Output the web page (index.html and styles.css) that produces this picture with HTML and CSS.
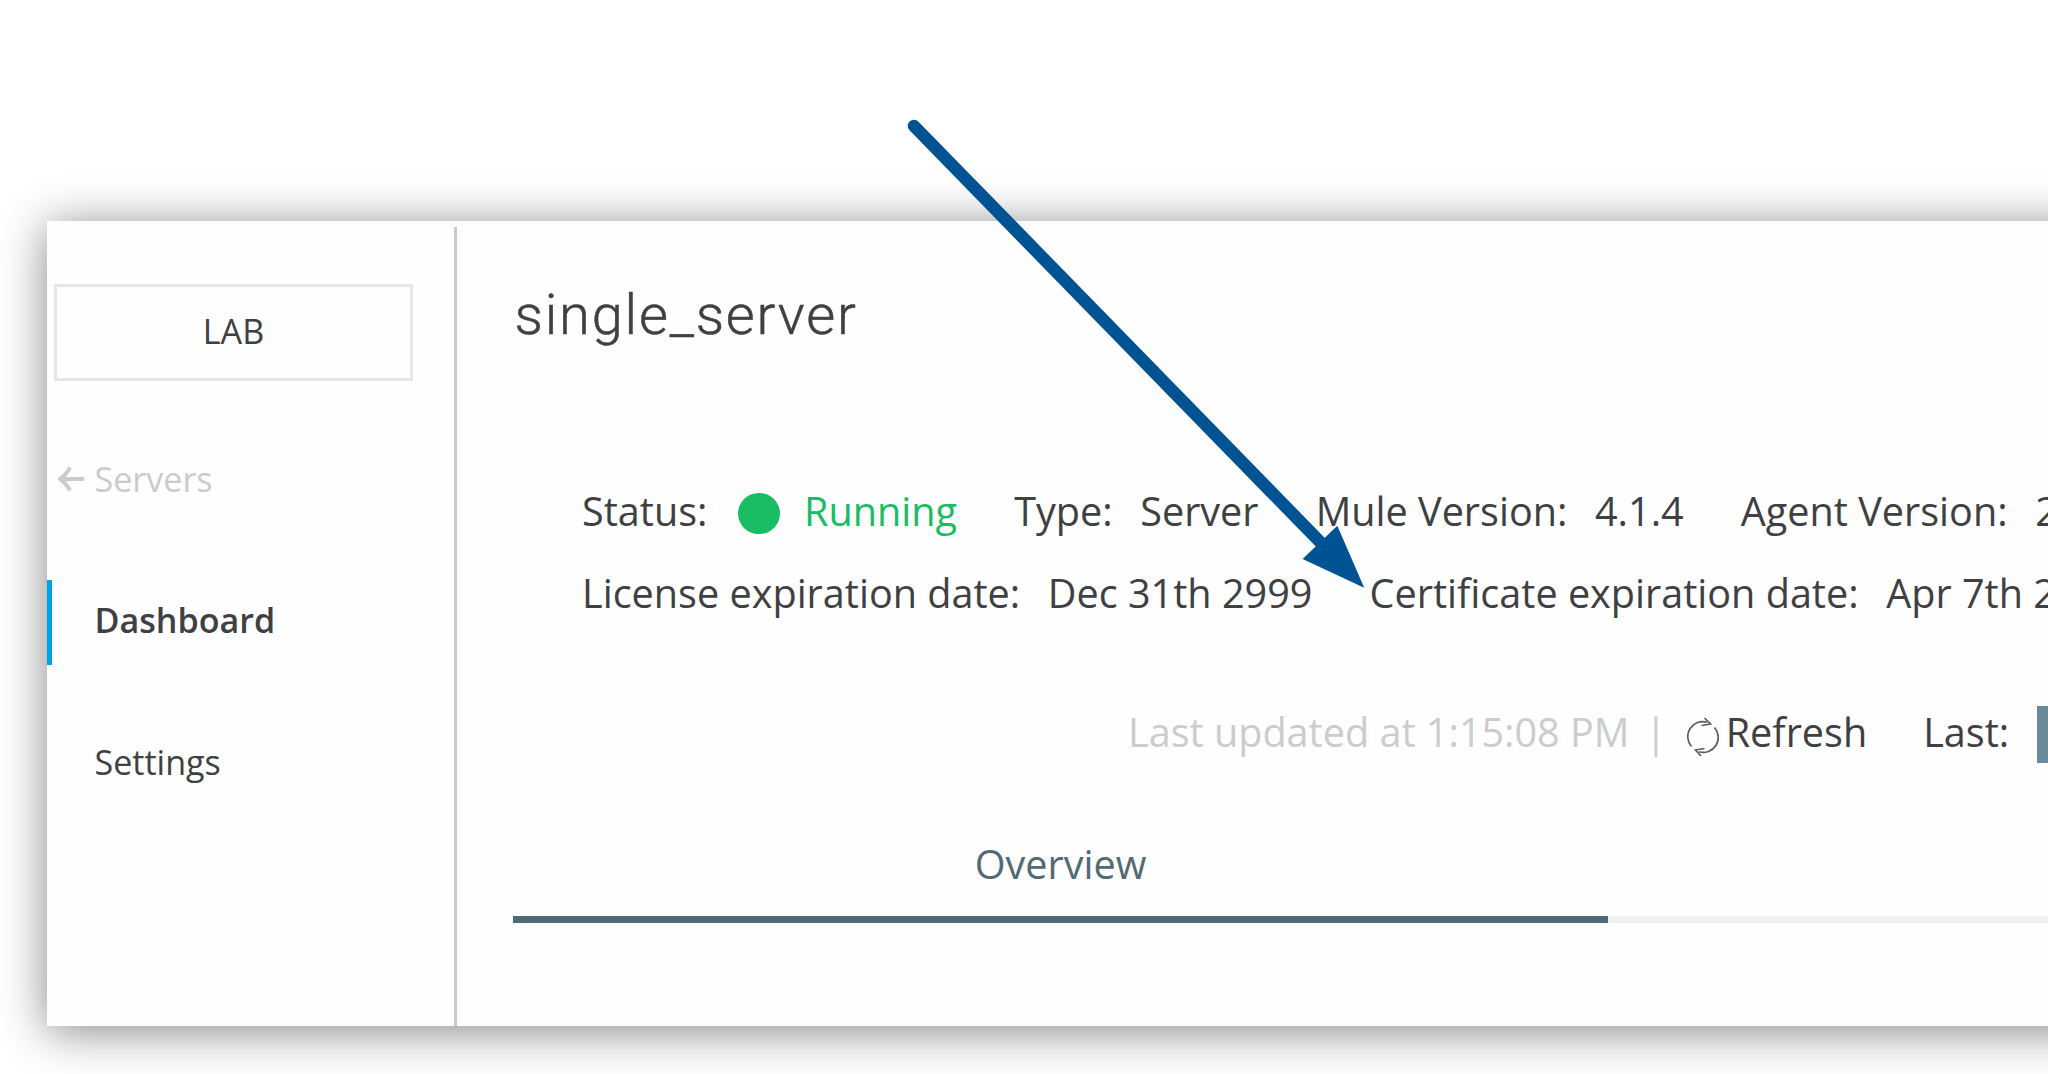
FILE: index.html
```
<!DOCTYPE html>
<html lang="en">
<head>
<meta charset="utf-8">
<title>single_server</title>
<link rel="stylesheet" href="styles.css">
</head>
<body>
<div class="page">
<div class="panel">
  <nav class="sidebar">
    <div class="env">LAB</div>
    <a class="back">
      <svg class="back-icon" viewBox="0 0 26 26"><path d="M26 13H3M12 1.5Q8 9 2 13Q8 17 12 24.500" fill="none" stroke="currentColor" stroke-width="4"/></svg>
      <span>Servers</span>
    </a>
    <a class="nav-item active">Dashboard</a>
    <a class="nav-item">Settings</a>
  </nav>
  <main class="content">
    <h1 class="title">single_server</h1>
    <section class="details">
      <div class="row">
        <div class="pair status"><span>Status:</span><span class="dot"></span><span class="running">Running</span></div>
        <div class="pair"><span>Type:</span><span>Server</span></div>
        <div class="pair"><span>Mule Version:</span><span>4.1.4</span></div>
        <div class="pair"><span>Agent Version:</span><span>2</span></div>
      </div>
      <div class="row">
        <div class="pair"><span>License expiration date:</span><span>Dec 31th 2999</span></div>
        <div class="pair"><span>Certificate expiration date:</span><span>Apr 7th 2</span></div>
      </div>
    </section>
    <div class="toolbar">
      <span class="muted">Last updated at 1:15:08 PM</span>
      <span class="muted separator">|</span>
      <span class="refresh">
        <svg class="refresh-icon" viewBox="0 0 32 40" fill="none" stroke="#5a5c5e" stroke-width="1.700">
          <path d="M4.500 29.500A15 15 0 0 1 20 5.200"/>
          <path d="M27.500 10.500A15 15 0 0 1 12 34.800"/>
          <path d="M17.500 1L23.500 7L14.500 8.500"/>
          <path d="M17.500 31.500L8.500 33L14 39"/>
        </svg>
        <span>Refresh</span>
      </span>
      <span class="last">Last:</span>
      <span class="range"></span>
    </div>
    <div class="tabs">
      <div class="tab selected">Overview</div>
      <div class="tab rest"></div>
    </div>
  </main>
</div>
</div>
<svg class="arrow" viewBox="0 0 2048 1074">
  <path d="M914 126L1325 547" stroke="#005392" stroke-width="12.500" stroke-linecap="round"/>
  <path d="M1364.200 587.800L1337.300 525.700L1302.600 558.900Z" fill="#005392"/>
</svg>
</body>
</html>
```
FILE: styles.css
```
* { box-sizing: border-box; }

body {
  margin: 0;
  background: #fff;
  color: #3f4042;
  font-family: "Open Sans", "Noto Sans", sans-serif;
  font-size: 39.6px;
  white-space: nowrap;
}

.page {
  width: 2048px;
  height: 1074px;
  padding: 221px 0 0 47px;
  overflow: hidden;
}

.panel {
  display: flex;
  width: 2140px;
  height: 805px;
  background: #fefefe;
  box-shadow: 0 5px 44px rgba(0, 0, 0, 0.48);
}

.sidebar {
  width: 410px;
  margin-top: 6px;
  padding-top: 57px;
  border-right: 3px solid #c9c9c9;
  font-size: 34.1px;
}

.env {
  display: flex;
  align-items: center;
  justify-content: center;
  width: 359px;
  height: 97px;
  margin-left: 7px;
  padding-bottom: 4px;
  border: 3px solid #e6e6e6;
}

.back {
  display: flex;
  align-items: center;
  gap: 10.500px;
  height: 48px;
  margin-top: 74px;
  padding-left: 11px;
  color: #cacbcd;
}

.back-icon { width: 26px; height: 26px; }

.nav-item {
  display: flex;
  align-items: center;
  height: 85px;
  margin-top: 57px;
  padding: 0 0 6px 42.500px;
  border-left: 5px solid transparent;
}

.nav-item.active {
  margin-top: 77px;
  border-left-color: #00a2df;
  font-weight: 600;
}

.content { flex: 1; padding: 53.500px 0 0 56px; }

.title {
  margin: 0 0 0 1.500px;
  font: 300 56px/80px Roboto, sans-serif;
  letter-spacing: 1.8px;
  -webkit-text-stroke: 0.5px currentColor;
}

.details { padding: 115px 0 0 69px; }

.row { display: flex; gap: 57.200px; height: 82px; line-height: 82px; }

.pair { display: flex; gap: 27.600px; }

.status { align-items: center; gap: 0; }

.dot {
  width: 41.500px;
  height: 41.500px;
  margin: 6px 24px 0 31px;
  border-radius: 50%;
  background: #1abc64;
}

.running { color: #1abc64; }

.toolbar {
  display: flex;
  height: 57px;
  margin-top: 72px;
  padding-left: 615px;
  line-height: 52px;
}

.muted { color: #cbcccd; }

.separator { margin: 0 20.500px 0 15.500px; }

.refresh { display: flex; gap: 6.500px; }

.refresh-icon { width: 32px; height: 40px; margin-top: 11px; }

.last { margin: 0 27.500px 0 56px; }

.range { width: 120px; height: 57px; background: #6b8a99; }

.tabs { display: flex; margin-top: 48.500px; }

.tab { height: 112px; border-bottom: 7px solid #f1f1f1; line-height: 107px; text-align: center; }

.tab.selected { width: 1095px; border-color: #526a73; color: #526a73; }

.tab.rest { flex: 1; }

.arrow {
  position: absolute;
  top: 0;
  left: 0;
  width: 2048px;
  height: 1074px;
}
```
